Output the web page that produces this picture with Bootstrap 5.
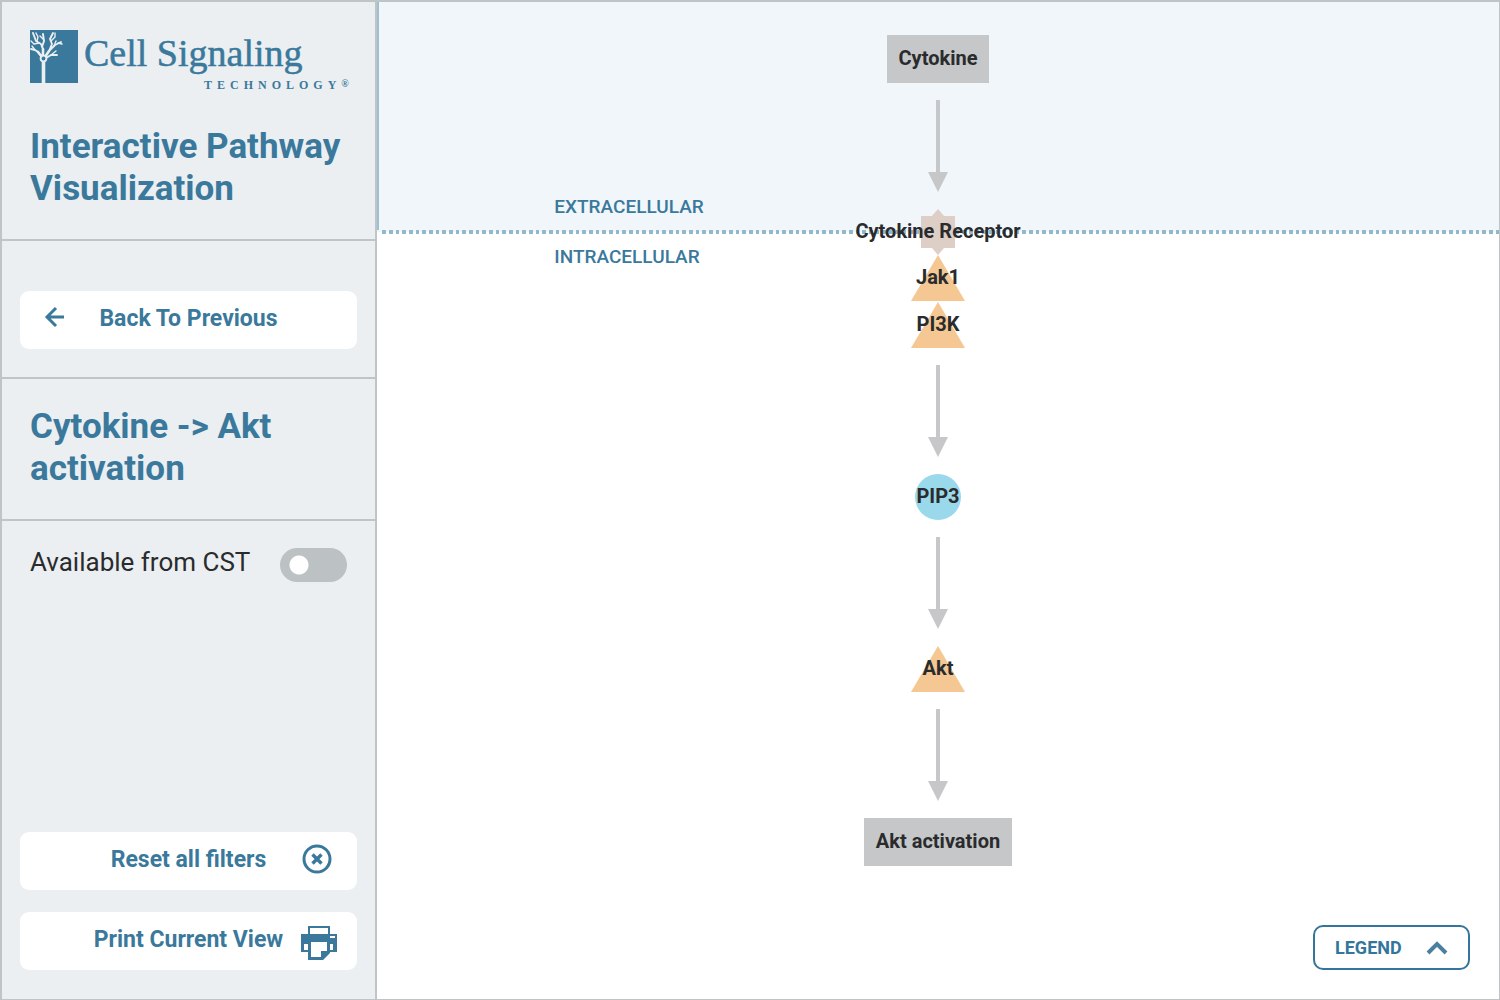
<!DOCTYPE html>
<html lang="en">
<head>
<meta charset="utf-8">
<meta name="viewport" content="width=device-width, initial-scale=1">
<title>Interactive Pathway Visualization</title>
<link href="https://cdn.jsdelivr.net/npm/bootstrap@5.3.0/dist/css/bootstrap.min.css" rel="stylesheet">
<style>
  :root { --cst-blue: #3a799c; --cst-line: #bfc4c7; --cst-panel: #ebeff2; --cst-ink: #2a2b2d; }
  body { font-family: Roboto, "Liberation Sans", sans-serif; color: var(--cst-ink); }
  .app-frame { border: 1px solid var(--cst-line); border-top-width: 2px; border-left-width: 2px; }
  .side-panel { width: 375px; background: var(--cst-panel); border-right: 2px solid var(--cst-line); }
  .side-block { border-bottom: 2px solid var(--cst-line); }
  .head-block { padding: 28px 28px 29px; }
  .back-block { padding: 50px 18px 28px; }
  .name-block { padding: 27px 28px 29px; }
  .filter-block { padding: 22px 28px; }
  .action-block { padding: 0 18px 29px; gap: 22px; }
  .panel-title { font-size: 35px; line-height: 42px; font-weight: 700; color: var(--cst-blue); }
  .logo-box { height: 96px; color: var(--cst-blue); font-family: "Liberation Serif", serif; text-decoration: none; }
  .logo-name { font-size: 38px; line-height: 46px; margin-left: 6px; white-space: nowrap; -webkit-text-stroke: 0.5px; }
  .logo-sub { font-size: 12px; line-height: 16px; letter-spacing: 5px; margin-left: 126px; font-weight: 700; }
  .logo-reg { font-size: 10px; letter-spacing: 0; vertical-align: 2px; }
  .btn-panel { --bs-btn-bg: #fff; --bs-btn-color: var(--cst-blue); --bs-btn-hover-bg: #f6f9fb; --bs-btn-hover-color: var(--cst-blue);
    --bs-btn-border-width: 0; --bs-btn-border-radius: 9px; height: 58px; padding: 0 0 2px; font-size: 23px; font-weight: 700; }
  .btn-icon { top: 50%; transform: translateY(-50%); }
  .icon-back { left: 23px; margin-top: -3px; }
  .icon-reset { right: 25px; margin-top: -2px; }
  .icon-print { right: 20px; margin-top: 2px; }
  .filter-text { font-size: 26px; line-height: 38px; }
  .form-check-input.cst-switch { width: 67px; height: 34px; margin: 5px 0 0; border: 0; border-radius: 17px; background-color: #bcc1c4;
    background-image: radial-gradient(circle closest-side at 19px 17px, #fff 9px, transparent 10px); background-size: auto; background-position: 0 0; }
  .form-check-input.cst-switch:checked { background-color: var(--cst-blue); background-position: 29px 0; }
  .zone-out { height: 228px; background: #f1f6fa; border-left: 2px solid #9dc0d3; padding-bottom: 9px; }
  .zone-tag { width: 500px; font-size: 19px; line-height: 28px; font-weight: 500; color: var(--cst-blue); }
  .zone-in { padding-top: 9px; }
  .membrane { background: linear-gradient(#f1f6fa 50%, #fff 50%); height: 4px; }
  .pathway { padding-top: 33px; gap: 17px; font-size: 20px; line-height: 24px; font-weight: 700; }
  .node-box { background: #c6c7c9; height: 48px; padding: 11px 12px; }
  .node { height: 46px; width: 56px; }
  .node span { top: 10px; left: 50%; transform: translateX(-50%); white-space: nowrap; }
  .complex { gap: 1px; }
  .btn-legend { --bs-btn-color: #34769b; --bs-btn-border-color: #34769b; --bs-btn-bg: #fff; --bs-btn-border-width: 2px; --bs-btn-border-radius: 10px;
    --bs-btn-hover-color: #34769b; --bs-btn-hover-border-color: #34769b; right: 29px; bottom: 29px; width: 157px; height: 45px; padding: 0 20px;
    font-size: 18px; font-weight: 700; }
</style>
<script src="https://cdn.jsdelivr.net/npm/bootstrap@5.3.0/dist/js/bootstrap.bundle.min.js"></script>
</head>
<body>
<div class="app-frame d-flex min-vh-100">
  <aside class="side-panel d-flex flex-column flex-shrink-0">
    <header class="side-block head-block">
      <a href="#" class="logo-box d-flex align-items-start">
        <svg width="48" height="53" viewBox="0 0 48 53" class="flex-shrink-0" aria-hidden="true">
          <path fill="#3a799c" d="M0 0h48v53H0z"/>
          <g fill="none" stroke="#ebeff2" stroke-linecap="round" stroke-linejoin="round">
            <path stroke-width="3.6" stroke-linecap="butt" d="M13.500 53V30"/>
            <path stroke-width="2.6" d="M12 27 8 22M13 26V19M15 27l4-6"/>
            <path stroke-width="1.900" d="M8 22 5 20 1 19M13 19l-2-5-5-3-3-8M12 17l2-6-1-7M19 21l3-7-2-5 3-6M19 21l6-6 6-3M16 28l5-3 6 0"/>
            <path stroke-width="1.400" d="M9 13 4 14 1 11M7 11 8 7 6 3M13 9l-3-3M21 11l4-4 0-4M24 16l2-5M21 25l5-4M5 20 2 16M28 13l4 1"/>
          </g>
          <circle cx="13.500" cy="28.500" r="3.800" fill="#ebeff2"/>
          <circle cx="13.500" cy="28.500" r="1.900" fill="#3a799c"/>
        </svg>
        <span class="d-flex flex-column align-items-start">
          <span class="logo-name">Cell Signaling</span>
          <span class="logo-sub text-nowrap">TECHNOLOGY<span class="logo-reg">®</span></span>
        </span>
      </a>
      <h1 class="panel-title mb-0">Interactive Pathway Visualization</h1>
    </header>

    <div class="side-block back-block">
      <button type="button" class="btn btn-panel w-100 position-relative">
        <svg class="btn-icon icon-back position-absolute" width="24" height="24" viewBox="0 0 24 24" fill="none" stroke="#3a799c" stroke-width="3" aria-hidden="true"><path d="M13 3 4 12l9 9M4 12h17"/></svg>
        Back To Previous
      </button>
    </div>

    <div class="side-block name-block">
      <h2 class="panel-title mb-0">Cytokine -&gt; Akt activation</h2>
    </div>

    <div class="filter-block d-flex justify-content-between align-items-start">
      <label for="availableCst" class="filter-text">Available from CST</label>
      <input id="availableCst" type="checkbox" role="switch" class="form-check-input cst-switch">
    </div>

    <div class="action-block d-flex flex-column mt-auto">
      <button type="button" class="btn btn-panel w-100 position-relative">
        Reset all filters
        <svg class="btn-icon icon-reset position-absolute" width="30" height="30" viewBox="0 0 30 30" fill="none" stroke="#3a799c" aria-hidden="true"><circle cx="15" cy="15" r="13" stroke-width="3"/><path stroke-width="3.400" d="m10.500 10.500 9 9m0-9-9 9"/></svg>
      </button>
      <button type="button" class="btn btn-panel w-100 position-relative">
        Print Current View
        <svg class="btn-icon icon-print position-absolute" width="37" height="36" viewBox="0 0 37 36" aria-hidden="true">
          <path fill="#3a799c" d="M8 1h22v8h7v18h-7v1l-7 7H8v-8H1V9h7z"/>
          <path fill="#fff" d="M10 3h18v6H10zM30 11h5v2h-5zM6 19h2v6H4v-6zM30 19h3v6h-3zM11 17h16v9h-6v6H11z"/>
        </svg>
      </button>
    </div>
  </aside>

  <main class="flex-grow-1 position-relative d-flex flex-column bg-white">
    <section class="zone-out d-flex align-items-end">
      <div class="zone-tag text-center">EXTRACELLULAR</div>
    </section>
    <svg class="membrane w-100" aria-hidden="true"><line x1="5" y1="2" x2="100%" y2="2" stroke="#93b8cc" stroke-width="4" stroke-dasharray="4 3 4 3 3 3"/></svg>
    <section class="zone-in flex-grow-1">
      <div class="zone-tag text-center">INTRACELLULAR</div>
    </section>

    <svg width="0" height="0" class="position-absolute" aria-hidden="true">
      <symbol id="arrow" viewBox="0 0 22 92"><path fill="#c6c7c9" d="M9 0h4v72h8L11 92 1 72h8z"/></symbol>
      <symbol id="kinase" viewBox="0 0 56 46"><path fill="#f4c793" d="M28 0 55 46H1z"/></symbol>
    </svg>
    <div class="pathway position-absolute top-0 start-0 w-100 d-flex flex-column align-items-center">
      <div class="node-box">Cytokine</div>
      <svg width="22" height="92" aria-hidden="true"><use href="#arrow"/></svg>
      <div>
        <div class="node position-relative">
          <svg class="d-block" width="56" height="46" viewBox="0 0 56 46" aria-hidden="true"><path fill="#ddcec6" d="M11 7h11l6-7 6 7h11v32H34l-6 7-6-7H11z"/></svg>
          <span class="position-absolute">Cytokine Receptor</span>
        </div>
        <div class="complex d-flex flex-column">
          <div class="node position-relative"><svg class="d-block" width="56" height="46" aria-hidden="true"><use href="#kinase"/></svg><span class="position-absolute">Jak1</span></div>
          <div class="node position-relative"><svg class="d-block" width="56" height="46" aria-hidden="true"><use href="#kinase"/></svg><span class="position-absolute">PI3K</span></div>
        </div>
      </div>
      <svg width="22" height="92" aria-hidden="true"><use href="#arrow"/></svg>
      <div class="node position-relative"><svg class="d-block" width="56" height="46" aria-hidden="true"><circle cx="28" cy="23" r="23" fill="#9ad8ec"/></svg><span class="position-absolute">PIP3</span></div>
      <svg width="22" height="92" aria-hidden="true"><use href="#arrow"/></svg>
      <div class="node position-relative"><svg class="d-block" width="56" height="46" aria-hidden="true"><use href="#kinase"/></svg><span class="position-absolute">Akt</span></div>
      <svg width="22" height="92" aria-hidden="true"><use href="#arrow"/></svg>
      <div class="node-box">Akt activation</div>
    </div>

    <button type="button" class="btn btn-legend position-absolute d-flex align-items-center justify-content-between">
      LEGEND
      <svg width="22" height="16" viewBox="0 0 22 16" fill="none" stroke="#4a7f9f" stroke-width="4" aria-hidden="true"><path d="m2 13 9-9 9 9"/></svg>
    </button>
  </main>
</div>
</body>
</html>
